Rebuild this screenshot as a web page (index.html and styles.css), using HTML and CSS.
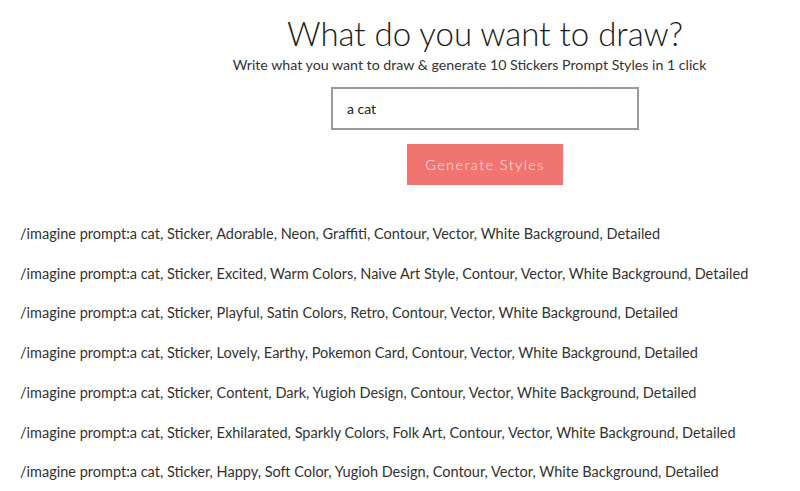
FILE: index.html
```html
<!DOCTYPE html>
<html>
<head>
<meta charset="utf-8">
<link rel="stylesheet" href="styles.css">
</head>
<body>
<header class="hero">
  <h1 class="title">What do you want to draw?</h1>
  <p class="subtitle">Write what you want to draw &amp; generate 10 Stickers Prompt Styles in 1 click</p>
  <div class="field"><input class="input" type="text" value="a cat"></div>
  <button class="btn">Generate Styles</button>
</header>
<main class="results">
  <p class="prompt">/imagine prompt:a cat, Sticker, Adorable, Neon, Graffiti, Contour, Vector, White Background, Detailed</p>
  <p class="prompt">/imagine prompt:a cat, Sticker, Excited, Warm Colors, Naive Art Style, Contour, Vector, White Background, Detailed</p>
  <p class="prompt">/imagine prompt:a cat, Sticker, Playful, Satin Colors, Retro, Contour, Vector, White Background, Detailed</p>
  <p class="prompt">/imagine prompt:a cat, Sticker, Lovely, Earthy, Pokemon Card, Contour, Vector, White Background, Detailed</p>
  <p class="prompt">/imagine prompt:a cat, Sticker, Content, Dark, Yugioh Design, Contour, Vector, White Background, Detailed</p>
  <p class="prompt">/imagine prompt:a cat, Sticker, Exhilarated, Sparkly Colors, Folk Art, Contour, Vector, White Background, Detailed</p>
  <p class="prompt">/imagine prompt:a cat, Sticker, Happy, Soft Color, Yugioh Design, Contour, Vector, White Background, Detailed</p>
</main>
</body>
</html>
```

FILE: styles.css
```css
* { box-sizing: border-box; }
html, body { margin: 0; padding: 0; background: #fff; }
body {
  font-family: "Lato", "Noto Sans", sans-serif;
  color: #333;
  overflow: hidden;
  height: 491px;
}
.hero {
  display: flex;
  flex-direction: column;
  align-items: center;
  padding-left: 170px;
  padding-top: 13px;
}
.title {
  margin: 0;
  font-size: 33px;
  font-weight: 300;
  line-height: 40px;
  color: #1a1a1a;
}
.subtitle {
  margin: 2px 0 0;
  padding-right: 31px;
  font-size: 14.2px;
  line-height: 20px;
  color: #333;
}
.field { margin-top: 12px; }
.input {
  display: block;
  width: 308px;
  height: 43px;
  border: 2px solid #9a9a9a;
  padding: 0 14px;
  font-family: inherit;
  font-size: 14px;
  color: #222;
  outline: none;
  background: #fff;
}
.btn {
  margin-top: 14px;
  width: 156px;
  height: 41px;
  border: 0;
  background: #f07470;
  color: #fde8e6;
  font-family: inherit;
  font-size: 14.5px;
  font-weight: 300;
  letter-spacing: 1.4px;
}
.results {
  padding: 0 20px;
  margin-top: 29px;
  display: flex;
  flex-direction: column;
}
.prompt {
  margin: 0;
  font-size: 14.5px;
  line-height: 39.7px;
  color: #333;
  white-space: nowrap;
}
```
